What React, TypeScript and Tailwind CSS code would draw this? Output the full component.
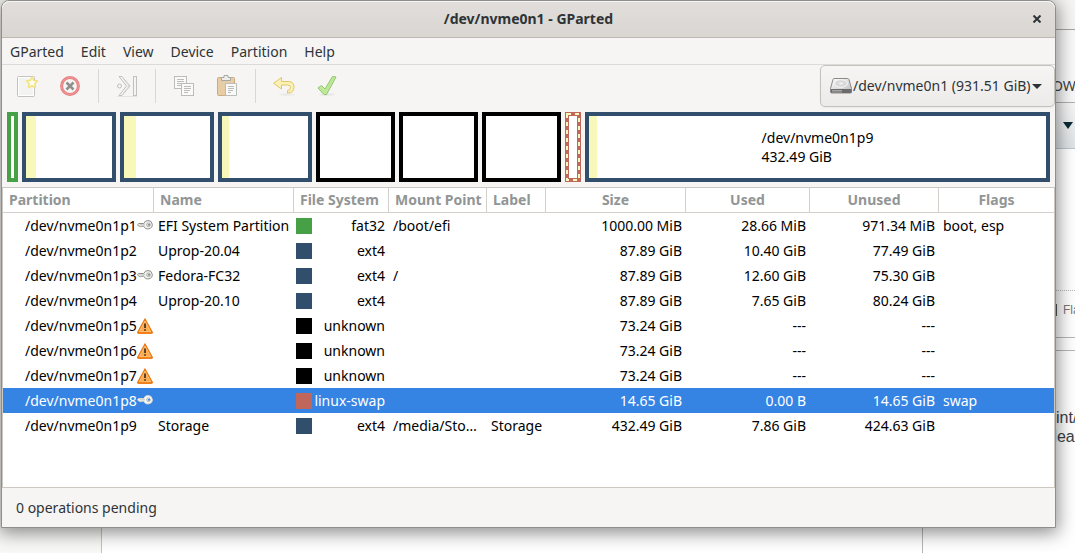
import { useId, useState, type ReactNode } from "react";

type Partition = {
  path: string;
  name?: string;
  fs: string;
  mount?: string;
  label?: string;
  size: string;
  used: string;
  unused: string;
  flags?: string;
  icon?: "key" | "warning";
};

const partitions: Partition[] = [
  { path: "/dev/nvme0n1p1", icon: "key", name: "EFI System Partition", fs: "fat32", mount: "/boot/efi", size: "1000.00 MiB", used: "28.66 MiB", unused: "971.34 MiB", flags: "boot, esp" },
  { path: "/dev/nvme0n1p2", name: "Uprop-20.04", fs: "ext4", size: "87.89 GiB", used: "10.40 GiB", unused: "77.49 GiB" },
  { path: "/dev/nvme0n1p3", icon: "key", name: "Fedora-FC32", fs: "ext4", mount: "/", size: "87.89 GiB", used: "12.60 GiB", unused: "75.30 GiB" },
  { path: "/dev/nvme0n1p4", name: "Uprop-20.10", fs: "ext4", size: "87.89 GiB", used: "7.65 GiB", unused: "80.24 GiB" },
  { path: "/dev/nvme0n1p5", icon: "warning", fs: "unknown", size: "73.24 GiB", used: "---", unused: "---" },
  { path: "/dev/nvme0n1p6", icon: "warning", fs: "unknown", size: "73.24 GiB", used: "---", unused: "---" },
  { path: "/dev/nvme0n1p7", icon: "warning", fs: "unknown", size: "73.24 GiB", used: "---", unused: "---" },
  { path: "/dev/nvme0n1p8", icon: "key", fs: "linux-swap", size: "14.65 GiB", used: "0.00 B", unused: "14.65 GiB", flags: "swap" },
  { path: "/dev/nvme0n1p9", name: "Storage", fs: "ext4", mount: "/media/Sto…", label: "Storage", size: "432.49 GiB", used: "7.86 GiB", unused: "424.63 GiB" },
];

const fsSwatch: Record<string, string> = {
  fat32: "bg-[#46a046]",
  ext4: "bg-[#314e6c]",
  unknown: "bg-black",
  "linux-swap": "bg-[#c1665a]",
};

const columns = [
  { title: "Partition", width: "w-[151px]", align: "text-left" },
  { title: "Name", width: "w-[140px]", align: "text-left" },
  { title: "File System", width: "w-[95px]", align: "text-left" },
  { title: "Mount Point", width: "w-[98px]", align: "text-left" },
  { title: "Label", width: "w-[59px]", align: "text-left" },
  { title: "Size", width: "w-[140px]", align: "text-center" },
  { title: "Used", width: "w-[124px]", align: "text-center" },
  { title: "Unused", width: "w-[129px]", align: "text-center" },
  { title: "Flags", width: "", align: "text-center" },
];

const menus = ["GParted", "Edit", "View", "Device", "Partition", "Help"];

function KeyIcon({ faded }: { faded: boolean }) {
  return (
    <svg viewBox="0 0 16 16" className="h-4 w-4" aria-hidden="true">
      <path
        d="M11 2.5a4.400 4.200 0 0 0-4.200 3H1.600L.5 6.800l1.300 1.400h1l.8.9.9-.9h2.300a4.400 4.200 0 1 0 4.200-5.700z"
        fill={faded ? "#f0f0ee" : "#fafaf8"}
        stroke={faded ? "#8f918c" : "#d3d7cf"}
      />
      <path d="M2.500 6.800H8" stroke="#babdb6" strokeWidth=".8" />
      <circle cx="11.500" cy="6.800" r="1.900" fill="#dfe0dc" stroke="#a3a59f" strokeWidth=".7" />
      <circle cx="12" cy="6.800" r="1" fill={faded ? "#888a85" : "#3584e4"} />
    </svg>
  );
}

function WarningIcon() {
  return (
    <svg viewBox="0 0 16 16" className="h-4 w-4" aria-hidden="true">
      <path d="M8 .6 15.500 14.200q.3 1.200-.9 1.300H1.400Q.2 15.400.5 14.200z" fill="#f57900" stroke="#e8700c" strokeWidth=".8" strokeLinejoin="round" />
      <path d="M8 3 13.700 13.700H2.300z" fill="#fbab52" stroke="#fcd19a" strokeWidth=".7" />
      <path d="M8 5.500v4.500M8 11.200v1.600" stroke="#42301c" strokeWidth="1.700" />
    </svg>
  );
}

function NewIcon() {
  return (
    <svg viewBox="0 0 24 24" className="h-6 w-6" aria-hidden="true">
      <rect x="2.500" y="2.500" width="17" height="20" rx="1" fill="#f3f3f1" stroke="#c2c3bf" />
      <rect x="3.500" y="3.500" width="15" height="18" fill="none" stroke="#fff" />
      <path d="m17 3 1.700 3.400 3.800.6-2.700 2.700.6 3.800-3.400-1.800-3.400 1.800.6-3.800L11.500 7l3.800-.6z" fill="#fffef2" stroke="#f4e37f" strokeWidth="1.600" strokeLinejoin="round" />
    </svg>
  );
}

function DeleteIcon() {
  return (
    <svg viewBox="0 0 24 24" className="h-6 w-6" aria-hidden="true">
      <circle cx="12" cy="12" r="8.400" fill="#f6f5f4" stroke="#e77e7e" strokeWidth="3" />
      <circle cx="12" cy="12" r="8.400" fill="none" stroke="#f29c9c" />
      <path d="m8.500 8.500 7 7m0-7-7 7" stroke="#8f908d" strokeWidth="2.600" />
    </svg>
  );
}

function ResizeIcon() {
  return (
    <svg viewBox="0 0 24 24" className="h-6 w-6" fill="#f4f4f3" stroke="#c0c1be" aria-hidden="true">
      <path d="M4 2.500h3l8 9.500-8 9.500H4L11.500 12z" />
      <circle cx="4.500" cy="12" r="2" />
      <path d="m8 4.500 6 7.500-6 7.500" fill="none" stroke="#dbdbd8" />
      <rect x="18.500" y="2.500" width="3" height="19" />
      <path d="M2 22.500h20" stroke="#e5e4e2" />
    </svg>
  );
}

function CopyIcon() {
  return (
    <svg viewBox="0 0 24 24" className="h-6 w-6" fill="#fafaf9" stroke="#bcbdba" aria-hidden="true">
      <rect x="2.500" y="2.500" width="12" height="12" />
      <path d="M5 5.500h7M5 7.500h7M5 9.500h6M5 11.500h4" />
      <rect x="9.500" y="9.500" width="12" height="12" />
      <path d="M12 12.500h7M12 14.500h7M12 16.500h6M12 18.500h4" />
    </svg>
  );
}

function PasteIcon() {
  return (
    <svg viewBox="0 0 24 24" className="h-6 w-6" aria-hidden="true">
      <rect x="2.500" y="3.500" width="17" height="18" rx="1" fill="#e7cda5" stroke="#cbac7e" />
      <path d="M6.500 6.500v-3h2.500v-2h4v2h2.500v3z" fill="#eeeeec" stroke="#a7a8a5" />
      <path d="M10.500 9.500h11v12h-11z" fill="#fafaf9" stroke="#bcbdba" />
      <path d="M13 12.500h6M13 14.500h6M13 16.500h5M13 18.500h3" stroke="#bcbdba" />
    </svg>
  );
}

function UndoIcon() {
  return (
    <svg viewBox="0 0 24 24" className="h-6 w-6" aria-hidden="true">
      <ellipse cx="15" cy="20.500" rx="8" ry="1.500" fill="#ecebe9" />
      <path d="M9.500 3.500v4H17q5 .5 5 5.500 0 6-6.500 6v-2.500q3-.2 3-3 0-2.500-3-2.500h-6v4L1.500 9.300z" fill="#fbf1b5" stroke="#dfc765" strokeLinejoin="round" />
    </svg>
  );
}

function ApplyIcon() {
  return (
    <svg viewBox="0 0 24 24" className="h-6 w-6" aria-hidden="true">
      <ellipse cx="12" cy="20.500" rx="8" ry="1.500" fill="#e9e9e6" />
      <path d="m3 14 3.500-2.500 3.500 3.500 7.500-12.500L21 3l-9.500 17.500H9z" fill="#c3ec9f" stroke="#8fc468" strokeLinejoin="round" />
      <path d="m5.500 14 4.500 4.500L18.500 4" fill="none" stroke="#b4e58e" />
    </svg>
  );
}

function DiskIcon() {
  const id = useId();
  return (
    <svg viewBox="0 0 24 18" className="h-[18px] w-6 shrink-0" aria-hidden="true">
      <defs>
        <linearGradient id={id} x1="0" y1="0" x2="1" y2="1">
          <stop offset="0" stopColor="#fff" />
          <stop offset="1" stopColor="#bbb" />
        </linearGradient>
      </defs>
      <path d="M5 1.500h13.500q1 0 1.500 1l2.500 9v3.500q0 1-1 1H2.500q-1 0-1-1v-3.500l2.500-9q.3-1 1-1z" fill={`url(#${id})`} stroke="#8a8a8a" />
      <path d="M2 12h20.500v3q0 1-1 1h-18.500q-1 0-1-1z" fill="#6b6b6b" />
      <path d="M3 13.500h10M3 15h10" stroke="#b5b5b5" strokeWidth=".8" />
      <ellipse cx="12" cy="6.500" rx="6.500" ry="3.800" fill="#d9d9d9" stroke="#f6f6f6" />
      <ellipse cx="12" cy="6.500" rx="2" ry="1" fill="#f4f4f4" />
    </svg>
  );
}

function ToolButton({ label, disabled = true, children }: { label: string; disabled?: boolean; children: ReactNode }) {
  return (
    <button type="button" aria-label={label} disabled={disabled} className="flex h-[42px] w-[43px] items-center justify-center">
      {children}
    </button>
  );
}

function ToolSeparator() {
  return (
    <div className="flex w-[14px] justify-center py-1">
      <div className="w-px bg-[#d9d7d5]" />
    </div>
  );
}

function Block({ frame, used = 0, children }: { frame: string; used?: number; children?: ReactNode }) {
  return (
    <div className={`relative flex h-[70px] items-center justify-center border-4 bg-white ${frame}`}>
      {used > 0 ? <div className="absolute inset-y-0 left-0 bg-[#f8f8ba]" style={{ width: `${used}%` }} /> : null}
      {children}
    </div>
  );
}

// Whatever is open behind the dialog; only its edges stay visible.
function Backdrop() {
  return (
    <div className="absolute inset-0 flex bg-white" aria-hidden="true">
      <div className="w-[102px] border-r border-[#c4c4c4] bg-[#f8f8f6]" />
      <div className="flex-1" />
      <div className="w-[153px] overflow-hidden border-l border-[#b6b6b6] font-['Liberation_Sans',sans-serif] text-[#3c4043]">
        <div className="h-[30px] border-b border-[#a5a5a5] bg-[#f6f5f4]" />
        <div className="flex h-[73px] items-end border-b border-[#b0b0b0] bg-[#f8f8f8] pb-1.5 pl-[129px] font-['Noto_Sans',sans-serif] text-[14px] leading-5">
          OW
        </div>
        <div className="flex h-[46px] items-center justify-end border-b border-[#b9c7cf] bg-linear-to-b from-[#f6f6f6] to-[#dfe3e6] pr-0.5">
          <svg viewBox="0 0 10 7" className="h-[7px] w-[10px]">
            <path d="M0 0h10L5 7z" fill="#0b2b36" />
          </svg>
        </div>
        <div className="h-[142px] border-b border-dotted border-[#b8b8b8]" />
        <div className="flex h-[47px] items-center gap-1.5 border-b border-[#b4b8ba] pl-[130px] text-[12px] text-[#777] [&>span]:-mt-2">
          <span className="h-3 w-1 shrink-0 border-t border-r-2 border-[#555]" />
          <p className="-mt-2">Fla</p>
        </div>
        <div className="h-[13px] border-b border-[#b4b8ba]" />
        <div className="pt-[57px] pl-[133px] text-[16px] leading-[19px]">
          <p>int/</p>
          <p className="-ml-2">dea</p>
        </div>
      </div>
    </div>
  );
}

export default function App() {
  const [selected, setSelected] = useState("/dev/nvme0n1p8");

  return (
    <div className="relative flex min-h-screen overflow-hidden font-['Noto_Sans',sans-serif] text-[14px] leading-5 text-[#2e3436]">
      <Backdrop />
      <main className="relative mr-[19px] mb-[25px] ml-px flex min-w-0 flex-1 flex-col rounded-t-lg border border-[#8e8e8c] bg-[#f6f5f4] shadow-[0_3px_18px_2px_rgba(0,0,0,0.45)]">
        <header className="flex h-[37px] items-center rounded-t-lg border-b border-[#bfb8b1] bg-linear-to-b from-[#e1dedb] to-[#dad6d2] pr-2 pl-7 shadow-[inset_0_1px_#f6f5f4]">
          <h1 className="flex-1 text-center font-bold">/dev/nvme0n1 - GParted</h1>
          <button type="button" aria-label="Close" className="flex h-5 w-5 items-center justify-center">
            <svg viewBox="0 0 8 8" className="h-2 w-2" aria-hidden="true">
              <path d="m.5.5 7 7m0-7-7 7" stroke="#2e3436" strokeWidth="2" />
            </svg>
          </button>
        </header>

        <nav className="flex h-[27px] items-center gap-[17px] border-b border-[#dddbd9] pt-0.5 pl-2">
          {menus.map((menu) => (
            <button key={menu} type="button">
              {menu}
            </button>
          ))}
        </nav>

        <div className="flex pl-[3px]">
          <ToolButton label="New"><NewIcon /></ToolButton>
          <ToolButton label="Delete"><DeleteIcon /></ToolButton>
          <ToolSeparator />
          <ToolButton label="Resize/Move"><ResizeIcon /></ToolButton>
          <ToolSeparator />
          <ToolButton label="Copy"><CopyIcon /></ToolButton>
          <ToolButton label="Paste"><PasteIcon /></ToolButton>
          <ToolSeparator />
          <ToolButton label="Undo"><UndoIcon /></ToolButton>
          <ToolButton label="Apply"><ApplyIcon /></ToolButton>
          <label className="ml-auto flex h-[42px] w-[235px] items-center rounded-[5px] border border-[#c6c0ba] bg-linear-to-b from-[#f6f5f4] to-[#edebe9] pr-3 pl-2 shadow-xs">
            <DiskIcon />
            <select aria-label="Device" className="min-w-0 flex-1 appearance-none outline-none">
              <option>/dev/nvme0n1 (931.51 GiB)</option>
            </select>
            <svg viewBox="0 0 10 5" className="h-[5px] w-[10px] shrink-0" aria-hidden="true">
              <path d="M0 0h10L5 5z" fill="#2e3436" />
            </svg>
          </label>
        </div>

        <div className="flex gap-1 p-[5px] text-black">
          <Block frame="w-[11px] border-[#46a046]" />
          <Block frame="w-[94px] border-[#314e6c]" used={11.8} />
          <Block frame="w-[94px] border-[#314e6c]" used={14.3} />
          <Block frame="w-[94px] border-[#314e6c]" used={8.7} />
          <Block frame="w-[79px] border-black" />
          <Block frame="w-[79px] border-black" />
          <Block frame="w-[79px] border-black" />
          <svg viewBox="0 0 16 70" className="h-[70px] w-4" aria-hidden="true">
            <path d="M0 0h16v70H0z" fill="#c1665a" />
            <path d="M4 4h8v62H4z" fill="#fff" />
            <rect x="2" y="2" width="12" height="66" fill="none" stroke="#f8f8ba" strokeWidth="2" strokeDasharray="4 4" />
          </svg>
          <Block frame="flex-1 border-[#314e6c]" used={1.8}>
            <p className="leading-[19px]">
              /dev/nvme0n1p9
              <br />
              432.49 GiB
            </p>
          </Block>
        </div>

        <div className="flex-1 border border-[#cdc7c2] bg-white">
          <table className="w-full table-fixed border-separate border-spacing-0 whitespace-nowrap text-black">
            <thead>
              <tr className="h-[25px] text-[#929595]">
                {columns.map((column) => (
                  <th
                    key={column.title}
                    scope="col"
                    className={`border-r border-b border-[#d5d0cc] px-1.5 font-bold last:border-r-0 ${column.width} ${column.align}`}
                  >
                    {column.title}
                  </th>
                ))}
              </tr>
            </thead>
            <tbody>
              {partitions.map((row) => {
                const active = row.path === selected;
                return (
                  <tr
                    key={row.path}
                    aria-selected={active}
                    onClick={() => setSelected(row.path)}
                    className={active ? "h-[25px] bg-[#3584e4] text-white" : "h-[25px]"}
                  >
                    <td className="p-0">
                      <div className="flex items-center justify-between pr-px pl-[22px]">
                        {row.path}
                        {row.icon === "key" ? <KeyIcon faded={!active} /> : null}
                        {row.icon === "warning" ? <WarningIcon /> : null}
                      </div>
                    </td>
                    <td className="px-1 py-0">{row.name}</td>
                    <td className="p-0">
                      <div className="flex items-center justify-between pr-1 pl-0.5">
                        <span className={`h-4 w-4 ${fsSwatch[row.fs]}`} />
                        {row.fs}
                      </div>
                    </td>
                    <td className="px-1 py-0">{row.mount}</td>
                    <td className="px-1 py-0">{row.label}</td>
                    <td className="px-1 py-0 text-right">{row.size}</td>
                    <td className="px-1 py-0 text-right">{row.used}</td>
                    <td className="px-1 py-0 text-right">{row.unused}</td>
                    <td className="px-1 py-0">{row.flags}</td>
                  </tr>
                );
              })}
            </tbody>
          </table>
        </div>

        <footer className="flex h-[39px] items-center px-[14px]">0 operations pending</footer>
      </main>
    </div>
  );
}
